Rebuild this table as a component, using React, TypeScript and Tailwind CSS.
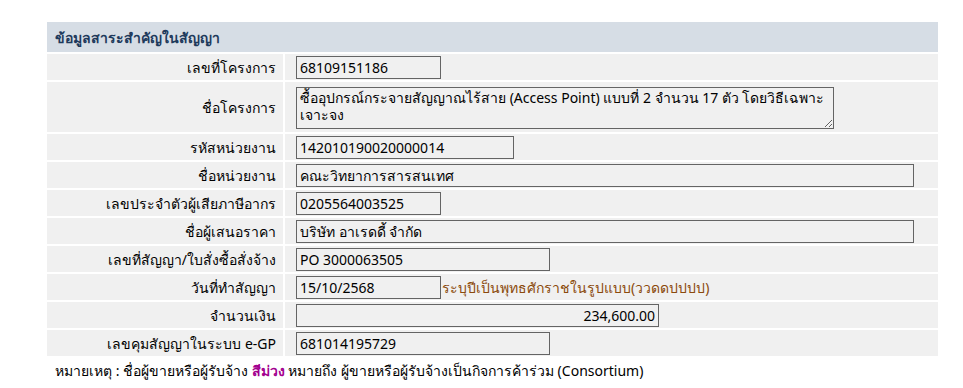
const font = { fontFamily: '"Noto Sans", "DejaVu Sans", sans-serif' };

type Field = {
  label: string;
  value: string;
  width: string;
  align?: "right";
  hint?: string;
};

const fields: Field[] = [
  { label: "เลขที่โครงการ", value: "68109151186", width: "w-[145px]" },
  { label: "รหัสหน่วยงาน", value: "142010190020000014", width: "w-[218px]" },
  { label: "ชื่อหน่วยงาน", value: "คณะวิทยาการสารสนเทศ", width: "w-[618px]" },
  { label: "เลขประจำตัวผู้เสียภาษีอากร", value: "0205564003525", width: "w-[145px]" },
  { label: "ชื่อผู้เสนอราคา", value: "บริษัท อาเรดดี้ จำกัด", width: "w-[618px]" },
  { label: "เลขที่สัญญา/ใบสั่งซื้อสั่งจ้าง", value: "PO 3000063505", width: "w-[254px]" },
  {
    label: "วันที่ทำสัญญา",
    value: "15/10/2568",
    width: "w-[145px]",
    hint: "ระบุปีเป็นพุทธศักราชในรูปแบบ(ววดดปปปป)",
  },
  { label: "จำนวนเงิน", value: "234,600.00", width: "w-[363px]", align: "right" },
  { label: "เลขคุมสัญญาในระบบ e-GP", value: "681014195729", width: "w-[254px]" },
];

function Row({ label, children, tall }: { label: string; children: React.ReactNode; tall?: boolean }) {
  return (
    <div className={`flex border-t-2 border-white ${tall ? "h-[52px]" : "h-[28px]"}`}>
      <div className="w-[236px] shrink-0 bg-[#f0f0f0] flex items-center justify-end pr-[7px] text-[14px] text-black">
        {label}
      </div>
      <div className="w-[2px] bg-white" />
      <div className="flex-1 bg-[#f0f0f0] flex items-center pl-[11px]">{children}</div>
    </div>
  );
}

function Box({ value, width, align }: { value: string; width: string; align?: "right" }) {
  return (
    <div
      className={`${width} h-[23px] border border-[#646464] px-[3px] flex items-center text-[14px] text-black ${
        align === "right" ? "justify-end" : ""
      }`}
    >
      {value}
    </div>
  );
}

export default function App() {
  return (
    <div className="w-[963px] h-[388px] bg-white pt-[22px]" style={font}>
      <div className="ml-[47px] w-[891px]">
        <div className="h-[30px] bg-[#d6dde5] flex items-center pl-[8px] text-[14px] font-bold text-[#1e3a5c]">
          ข้อมูลสาระสำคัญในสัญญา
        </div>

        <Row label={fields[0].label}>
          <Box {...fields[0]} />
        </Row>

        <Row label="ชื่อโครงการ" tall>
          <textarea
            readOnly
            className="w-[538px] h-[42px] mt-[1px] border border-[#646464] px-[3px] py-[1px] text-[14px] leading-[17px] text-black bg-transparent outline-none"
            style={font}
            value="ซื้ออุปกรณ์กระจายสัญญาณไร้สาย (Access Point) แบบที่ 2 จำนวน 17 ตัว โดยวิธีเฉพาะเจาะจง"
          />
        </Row>

        {fields.slice(1).map((f) => (
          <Row key={f.label} label={f.label}>
            <Box {...f} />
            {f.hint && <span className="ml-[1px] text-[14px] text-[#8b4a0b]">{f.hint}</span>}
          </Row>
        ))}
      </div>

      <p className="ml-[55px] mt-[4px] text-[14px] text-black">
        หมายเหตุ : ชื่อผู้ขายหรือผู้รับจ้าง <span className="font-bold text-[#a3008f]">สีม่วง</span> หมายถึง
        ผู้ขายหรือผู้รับจ้างเป็นกิจการค้าร่วม (Consortium)
      </p>
    </div>
  );
}
